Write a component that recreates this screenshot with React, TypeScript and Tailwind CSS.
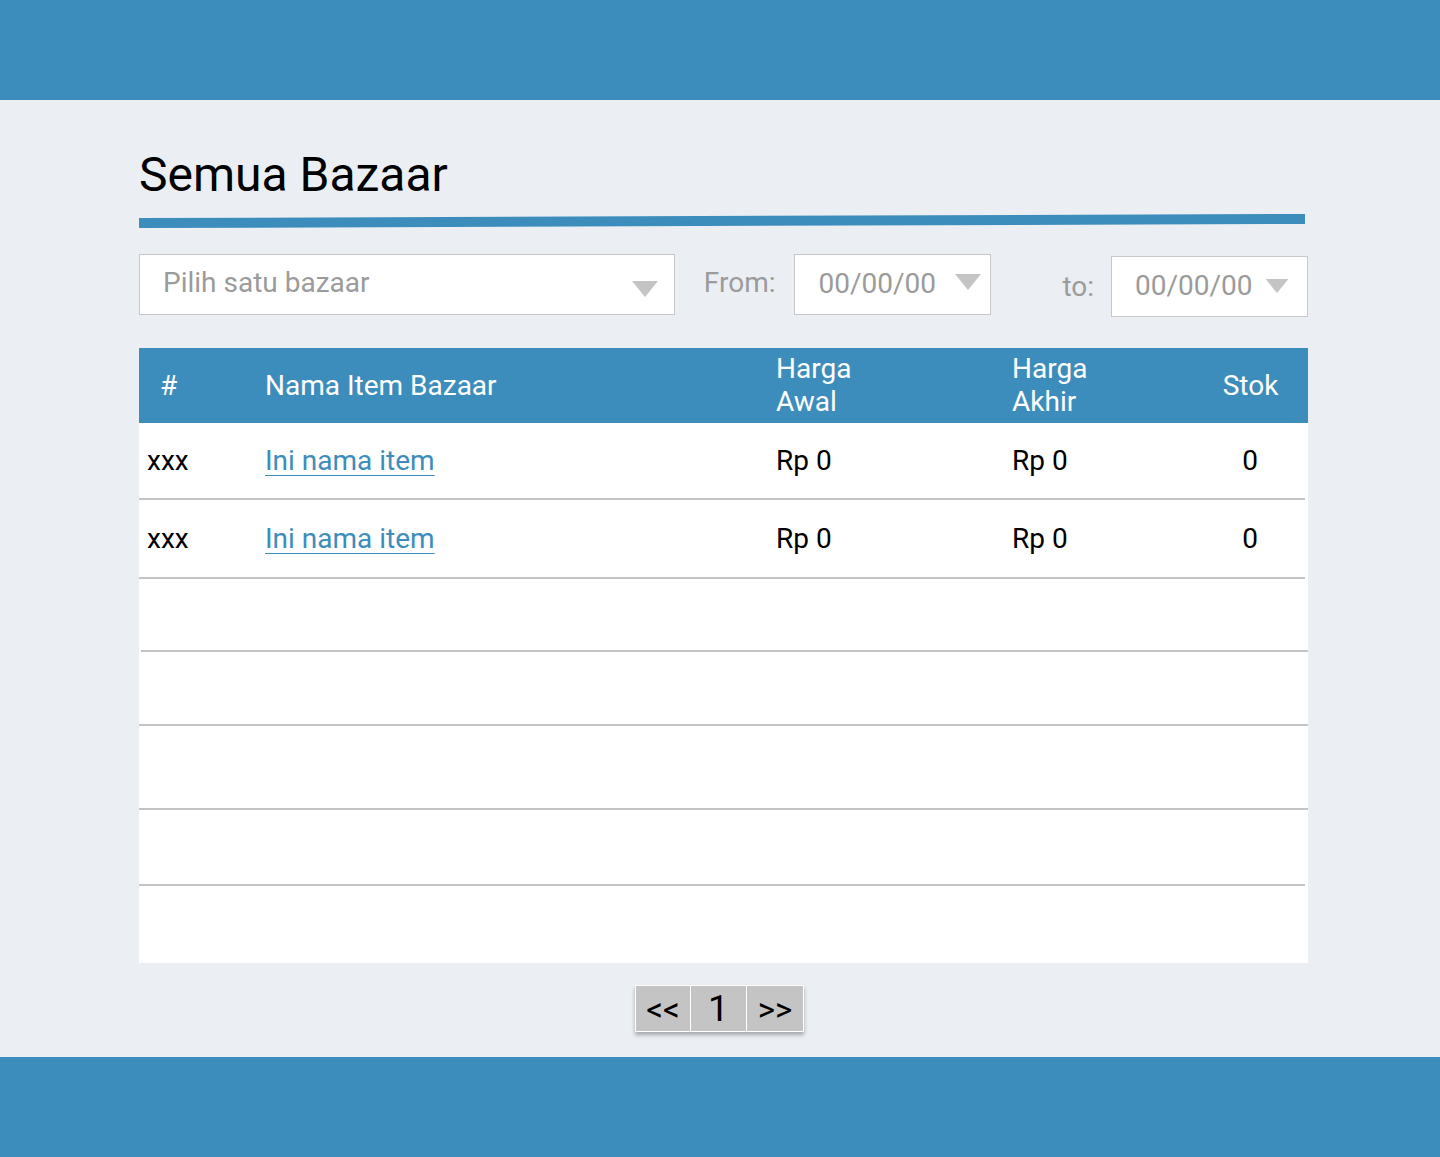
const rows = [
  { id: "xxx", name: "Ini nama item", awal: "Rp 0", akhir: "Rp 0", stok: "0", h: "h-[75px]" },
  { id: "xxx", name: "Ini nama item", awal: "Rp 0", akhir: "Rp 0", stok: "0", h: "h-[77px]" },
]

const Caret = ({ className }: { className?: string }) => (
  <svg width="26" height="16" viewBox="0 0 26 16" className={className}>
    <polygon points="0,0 26,0 13,16" fill="#c4c4c4" />
  </svg>
)

const DateBox = ({ className, caret }: { className?: string; caret?: string }) => (
  <div className={"w-[197px] h-[61px] bg-white border border-[#c8c8c8] flex items-center pl-[23px] " + (className ?? "")}>
    <span className="text-[28px] text-[#9b9b9b] leading-[33px] -mt-[3px]">00/00/00</span>
    <Caret className={"ml-auto " + (caret ?? "")} />
  </div>
)

const App = () => {
  return (
    <div className="w-full min-h-screen bg-[#ebeff4] font-['Roboto',sans-serif]">
      <div className="h-[100px] bg-[#3d8dbc]"></div>

      <div className="h-[957px] pt-[47px]">
        <div className="ml-[139px] w-[1169px]">
          <h1 className="text-[48px] leading-[56px] text-black">Semua Bazaar</h1>
          <div className="mt-[13px] h-[10px] w-[1166px] bg-[#3d8dbc] -rotate-[0.2deg]"></div>

          {/* filters */}
          <div className="mt-[28px] flex items-start">
            <div className="w-[536px] h-[61px] bg-white border border-[#c8c8c8] flex items-center pl-[23px] pr-[16px]">
              <span className="text-[28px] text-[#9b9b9b] leading-[33px] -mt-[4px]">Pilih satu bazaar</span>
              <Caret className="ml-auto mt-[8px]" />
            </div>
            <span className="ml-[29px] mt-[12px] text-[28px] text-[#9b9b9b] leading-[33px]">From:</span>
            <DateBox className="ml-[19px] pr-[9px]" caret="-mt-[6px]" />
            <span className="ml-[71px] mt-[16px] text-[28px] text-[#9b9b9b] leading-[33px]">to:</span>
            <DateBox className="ml-[17px] mt-[2px] pr-[17px]" caret="-mt-[2px] h-[14px]" />
          </div>

          {/* table */}
          <div className="mt-[31px] bg-white">
            <div className="h-[75px] bg-[#3d8dbc] text-white text-[28px] grid grid-cols-[126px_511px_236px_1fr_116px] items-center">
              <span className="pl-[21px]">#</span>
              <span>Nama Item Bazaar</span>
              <span className="leading-[33px] -mt-[2px]">Harga<br />Awal</span>
              <span className="leading-[33px] -mt-[2px]">Harga<br />Akhir</span>
              <span className="text-center pl-[1px]">Stok</span>
            </div>

            {rows.map((r, i) => (
              <div key={i}>
                <div className={r.h + " grid grid-cols-[126px_511px_236px_1fr_116px] items-center text-[28px] text-black"}>
                  <span className="pl-[8px]">{r.id}</span>
                  <a href="#" className="text-[#3d8dbc] underline decoration-1 underline-offset-[5px] w-fit">{r.name}</a>
                  <span>{r.awal}</span>
                  <span>{r.akhir}</span>
                  <span className="text-center">{r.stok}</span>
                </div>
                <div className="h-[2px] bg-[#c4c4c4] mr-[3px]"></div>
              </div>
            ))}

            <div className="h-[71px]"></div>
            <div className="h-[2px] bg-[#c4c4c4] ml-[2px]"></div>
            <div className="h-[72px]"></div>
            <div className="h-[2px] bg-[#c4c4c4]"></div>
            <div className="h-[82px]"></div>
            <div className="h-[2px] bg-[#c4c4c4]"></div>
            <div className="h-[74px]"></div>
            <div className="h-[2px] bg-[#c4c4c4] mr-[3px]"></div>
            <div className="h-[77px]"></div>
          </div>

          {/* pagination */}
          <div className="mt-[22px] flex justify-center pr-[8px]">
            <div className="flex bg-white border border-white gap-[1px] shadow-[0_3px_4px_rgba(0,0,0,0.3)]">
              <button className="w-[54px] h-[45px] bg-[#c4c4c4] text-[33px] leading-none text-black pt-[2px]">&lt;&lt;</button>
              <button className="w-[55px] h-[45px] bg-[#c4c4c4] text-[37px] leading-none text-black">1</button>
              <button className="w-[56px] h-[45px] bg-[#c4c4c4] text-[33px] leading-none text-black pt-[2px]">&gt;&gt;</button>
            </div>
          </div>
        </div>
      </div>

      <div className="h-[100px] bg-[#3d8dbc]"></div>
    </div>
  )
}
export default App
